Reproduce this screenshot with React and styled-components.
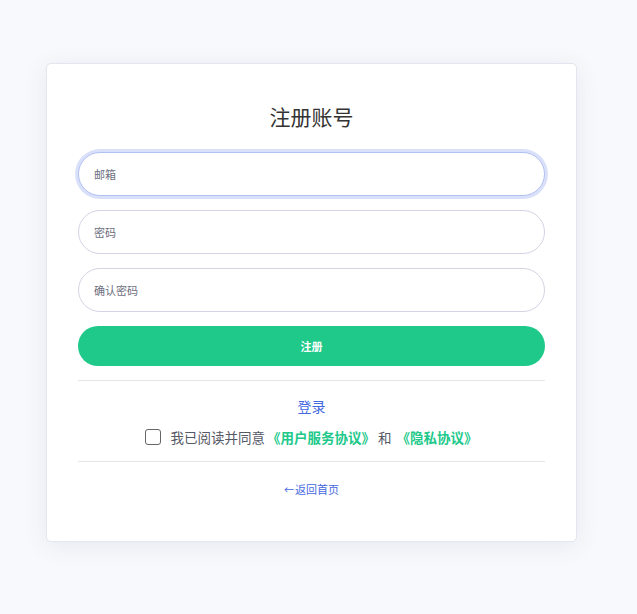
import React, { useState } from "react";
import styled, { createGlobalStyle } from "styled-components";

const GlobalStyle = createGlobalStyle`
  html, body {
    margin: 0;
    padding: 0;
    background: #f8f9fc;
    font-family: "Noto Sans CJK SC", "Noto Sans", sans-serif;
  }
`;

function App() {
  const [agree, setAgree] = useState(false);

  return (
    <Page>
      <GlobalStyle />
      <Card>
        <Title>注册账号</Title>
        <Form>
          <Input placeholder="邮箱" $focused />
          <Input placeholder="密码" type="password" />
          <Input placeholder="确认密码" type="password" />
          <SubmitButton type="button">注册</SubmitButton>
        </Form>
        <Divider />
        <LoginLink href="#">登录</LoginLink>
        <AgreeRow>
          <CheckBox
            type="checkbox"
            checked={agree}
            onChange={(e) => setAgree(e.target.checked)}
          />
          我已阅读并同意<Agreement href="#">《用户服务协议》</Agreement> 和{" "}
          <Agreement href="#">《隐私协议》</Agreement>
        </AgreeRow>
        <Divider />
        <BackLink href="#">
          <Arrow>←</Arrow>返回首页
        </BackLink>
      </Card>
    </Page>
  );
}

export default App;

const Page = styled.div`
  min-height: 614px;
  box-sizing: border-box;
  padding: 63px 0 0 46px;
`;

const Card = styled.div`
  width: 531px;
  box-sizing: border-box;
  background: #fff;
  border: 1px solid #e4e5ee;
  border-radius: 5px;
  box-shadow: 0 4px 24px rgba(60, 70, 120, 0.09);
  padding: 37px 31px 42px;
  display: flex;
  flex-direction: column;
  align-items: stretch;
`;

const Title = styled.h2`
  margin: 0 0 21px;
  text-align: center;
  font-size: 21px;
  line-height: 30px;
  font-weight: 400;
  color: #333;
`;

const Form = styled.div`
  display: flex;
  flex-direction: column;
  gap: 14px;
`;

const Input = styled.input`
  height: 44px;
  box-sizing: border-box;
  border-radius: 22px;
  border: 1px solid ${(p) => (p.$focused ? "#b3c1f2" : "#d3d4e4")};
  box-shadow: ${(p) =>
    p.$focused ? "0 0 0 3px rgba(120, 145, 235, 0.28)" : "none"};
  padding: 0 15px;
  font-size: 11px;
  font-family: inherit;
  color: #333;
  outline: none;
  &::placeholder {
    color: #6e6f7e;
  }
`;

const SubmitButton = styled.button`
  height: 40px;
  border: none;
  border-radius: 20px;
  background: #1fc98a;
  color: #fff;
  font-size: 11px;
  font-weight: 700;
  font-family: inherit;
  cursor: pointer;
`;

const Divider = styled.hr`
  border: none;
  border-top: 1px solid #e5e5ea;
  margin: 14px 0 0;
  width: 100%;
`;

const LoginLink = styled.a`
  align-self: center;
  margin-top: 14px;
  font-size: 14px;
  line-height: 22px;
  color: #4468e0;
  text-decoration: none;
`;

const AgreeRow = styled.label`
  display: flex;
  justify-content: center;
  align-items: center;
  white-space: pre;
  margin-top: 10px;
  font-size: 13.5px;
  line-height: 20px;
  color: #555865;
`;

const CheckBox = styled.input`
  appearance: none;
  width: 16px;
  height: 16px;
  margin: 0 9px 0 0;
  border: 1px solid #666;
  border-radius: 3px;
  background: #fff;
`;

const Agreement = styled.a`
  color: #20c98a;
  font-weight: 700;
  text-decoration: none;
  margin-left: 2px;
`;

const BackLink = styled.a`
  align-self: center;
  margin-top: 18px;
  font-size: 11px;
  line-height: 18px;
  color: #4468e0;
  text-decoration: none;
`;

const Arrow = styled.span`
  font-size: 10px;
  margin-right: 1px;
`;
